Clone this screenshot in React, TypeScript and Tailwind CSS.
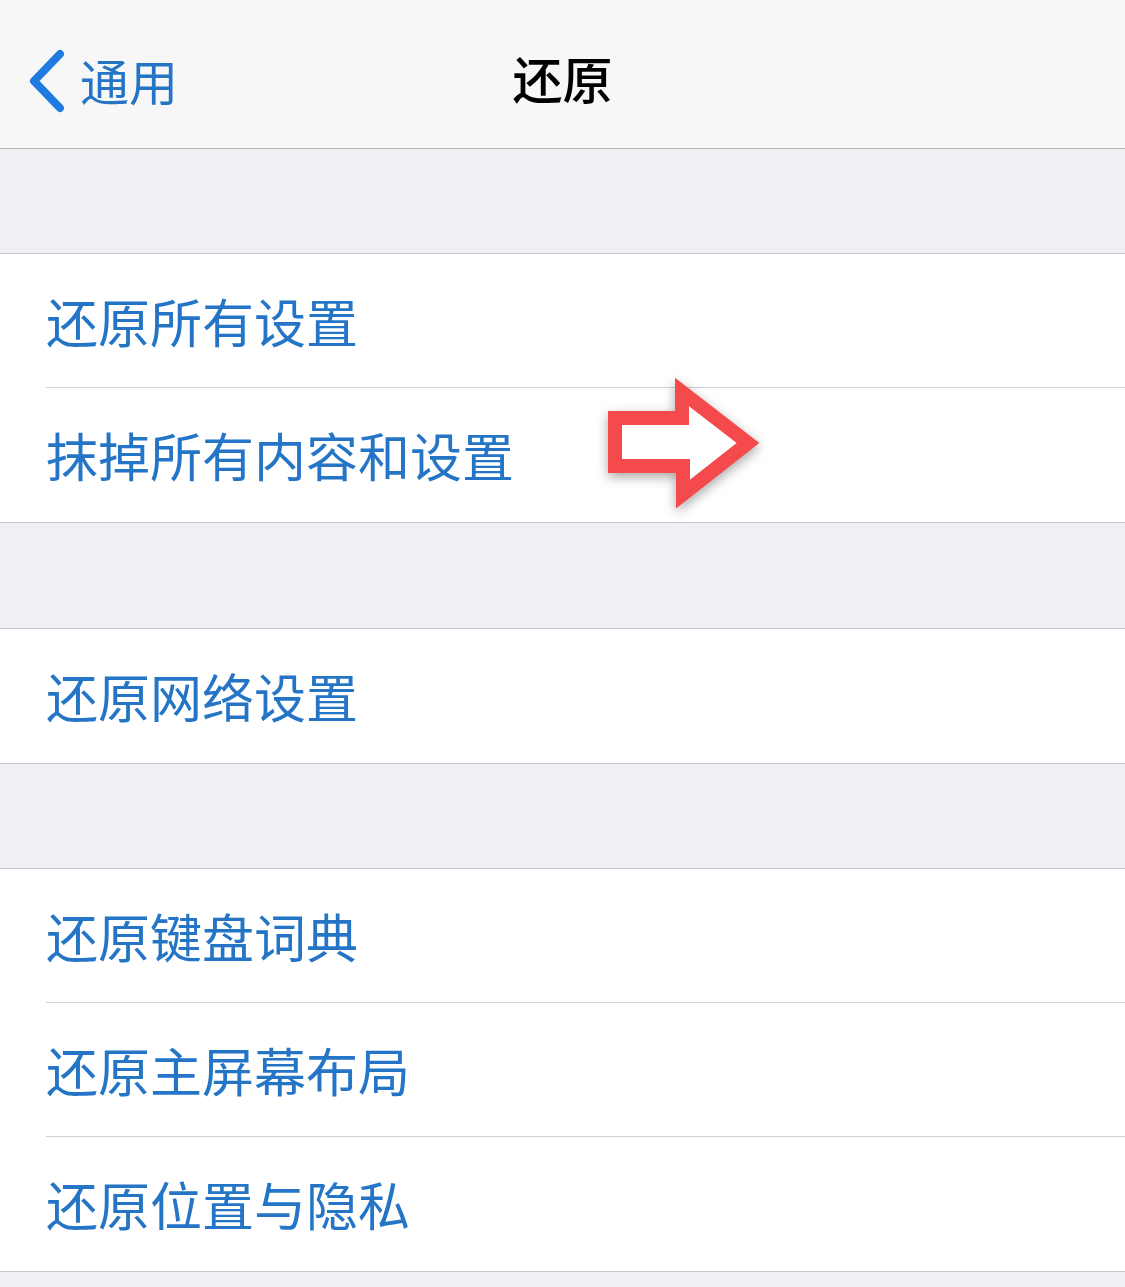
import React from 'react';

const font = { fontFamily: '"Noto Sans CJK SC", "Noto Sans", sans-serif' };

function Row({ label, last, children }: { label: string; last?: boolean; children?: React.ReactNode }) {
    return (
        <div className="relative bg-white pl-[46px]">
            <div className={`flex h-[134px] items-center ${last ? '' : 'border-b border-[#d0d0d4]'}`}>
                <span className="text-[52px] leading-none text-[#2575c7]">{label}</span>
                {children}
            </div>
        </div>
    );
}

function Gap({ h }: { h: string }) {
    return <div className={`${h} bg-[#efeff4] border-b border-[#c8c7cc]`} />;
}

function RedArrow() {
    return (
        <svg
            className="absolute left-[595px] top-[-18px] drop-shadow-[0_4px_6px_rgba(0,0,0,0.35)]"
            width="180"
            height="150"
            viewBox="595 370 180 150"
        >
            <polygon
                points="615,418 682,418 682,392 748,443 683,494 683,466 615,466"
                fill="#ffffff"
                stroke="#f44a4b"
                strokeWidth="14"
                strokeLinejoin="miter"
            />
        </svg>
    );
}

export default function App() {
    return (
        <div className="w-[1125px] h-[1287px] overflow-hidden bg-[#efeff4]" style={font}>
            {/* nav bar */}
            <div className="relative h-[149px] bg-[#f7f7f7] border-b border-[#b2b2b2] flex items-center justify-center">
                <div className="absolute left-[26px] top-[48px] flex items-center">
                    <svg width="44" height="66" viewBox="0 0 44 66">
                        <path d="M34 6 L8 33 L34 60" fill="none" stroke="#1f7be0" strokeWidth="8" strokeLinecap="round" strokeLinejoin="round" />
                    </svg>
                    <span className="ml-[10px] mt-[-4px] text-[49px] leading-none text-[#2575c7]">通用</span>
                </div>
                <span className="text-[50px] font-medium leading-none text-black mt-[6px]">还原</span>
            </div>

            <Gap h="h-[105px]" />
            <Row label="还原所有设置" />
            <div className="relative">
                <Row label="抹掉所有内容和设置" last />
                <RedArrow />
            </div>
            <div className="border-b border-[#c8c7cc]" />

            <Gap h="h-[106px]" />
            <Row label="还原网络设置" last />
            <div className="border-b border-[#c8c7cc]" />

            <Gap h="h-[105px]" />
            <Row label="还原键盘词典" />
            <Row label="还原主屏幕布局" />
            <Row label="还原位置与隐私" last />
            <div className="border-b border-[#c8c7cc]" />
        </div>
    );
}
